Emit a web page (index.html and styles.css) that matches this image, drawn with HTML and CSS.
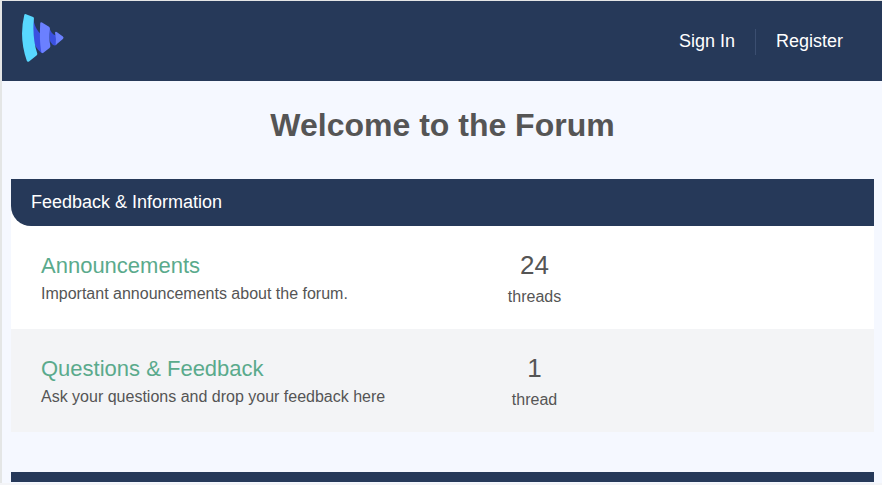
FILE: index.html
```html
<!DOCTYPE html>
<html lang="en">
<head>
<meta charset="utf-8">
<title>Forum</title>
<link rel="stylesheet" href="styles.css">
</head>
<body>
<div class="page">
  <header class="header">
    <a class="logo">
      <svg width="44" height="50" viewBox="0 0 44 50">
        <path fill="#3a50e0" d="M11.200 3.500C12 11 14.500 16.500 19.500 20.500L20.500 39.500C15.500 36.500 12 31 11 24Z"/>
        <path fill="#3a50e0" d="M27.300 13.500C28.500 17.500 30.500 20.500 34 21.500L34.500 31Q32.500 32 30.500 30.500Q28 28.500 27.500 25Z"/>
        <path fill="#58d8ff" d="M2.200 1.200Q2.500 -.3 4 .200L11.100 3.100Q12.100 3.600 11.900 4.700Q10.100 24 15.200 39.300Q15.600 40.800 14.500 41.600L7 47.400Q5.500 48.400 4.800 46.800Q-3.200 24 2.200 1.200Z"/>
        <path fill="#6b80ff" d="M18.200 9.600Q18.400 7.800 20 8.600L27 12.800Q28.100 13.600 27.900 15.100Q26.700 25 28.300 31.300Q28.700 33 27.500 34L21.400 38.700Q19.700 39.700 19.200 37.700Q17.200 26 18.200 9.600Z"/>
        <path fill="#6b80ff" d="M33 18.800Q33.200 17.300 34.700 18L40.900 22.500Q42.300 23.700 40.900 24.900L33.700 30.900Q34.500 25 33 18.800Z"/>
      </svg>
    </a>
    <nav class="nav">
      <a class="nav-link">Sign In</a>
      <a class="nav-link">Register</a>
    </nav>
  </header>
  <main class="main">
    <h1 class="title">Welcome to the Forum</h1>
    <section class="category">
      <div class="category-wrap"><h2 class="category-head">Feedback &amp; Information</h2></div>
      <div class="row">
        <div class="info">
          <a class="name">Announcements</a>
          <p class="desc">Important announcements about the forum.</p>
        </div>
        <div class="stat"><span class="count">24</span><span class="label">threads</span></div>
      </div>
      <div class="row row-alt">
        <div class="info">
          <a class="name">Questions &amp; Feedback</a>
          <p class="desc">Ask your questions and drop your feedback here</p>
        </div>
        <div class="stat"><span class="count">1</span><span class="label">thread</span></div>
      </div>
    </section>
    <div class="next-category"></div>
  </main>
</div>
</body>
</html>
```
FILE: styles.css
```css
* { box-sizing: border-box; }
body {
  margin: 0;
  height: 485px;
  overflow: hidden;
  background: #f3f4f7;
  color: #555;
  font-family: "Liberation Sans", Arial, sans-serif;
}
.page {
  height: 483px;
  border-top: 1px solid #e4e6e6;
  border-left: 2px solid #e4e6e6;
  background: #f5f8ff;
}
.header {
  display: flex;
  justify-content: space-between;
  height: 80px;
  padding: 13px 19px 0 20px;
  background: #263959;
}
.nav { display: flex; margin-top: 15px; height: 26px; }
.nav-link {
  padding: 0 20px;
  color: #fff;
  font-size: 18px;
  line-height: 25px;
}
.nav-link + .nav-link { border-left: 1px solid #3b4e70; }
.main { padding: 0 8px 0 9px; }
.title {
  margin: 0;
  height: 98px;
  padding-top: 26px;
  font-size: 32px;
  line-height: 37px;
  text-align: center;
}
.category-wrap { background: #fff; }
.category-head {
  margin: 0;
  height: 47px;
  padding-left: 20px;
  border-bottom-left-radius: 20px;
  background: #263959;
  color: #fff;
  font-size: 18px;
  font-weight: 400;
  line-height: 46px;
}
.row {
  display: flex;
  height: 103px;
  padding: 26px 30px 0;
  background: #fff;
}
.row-alt { background: #f3f4f6; }
.info { width: 434px; }
.name {
  display: block;
  color: #5aaa8c;
  font-size: 22px;
  line-height: 28px;
}
.desc { margin: 0; font-size: 16px; line-height: 28px; }
.stat {
  display: flex;
  flex-direction: column;
  align-items: center;
  width: 119px;
}
.count { font-size: 26px; line-height: 26px; }
.label { font-size: 16px; line-height: 38px; }
.next-category { height: 10px; margin-top: 40px; background: #263959; }
```
